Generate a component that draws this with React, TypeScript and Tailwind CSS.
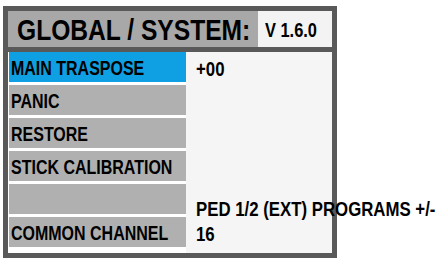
const font = { fontFamily: '"Liberation Sans", Arial, sans-serif' };

const rows = [
  { label: 'MAIN TRASPOSE', value: '+00', active: true },
  { label: 'PANIC', value: '' },
  { label: 'RESTORE', value: '' },
  { label: 'STICK CALIBRATION', value: '' },
  { label: '', value: 'PED 1/2 (EXT) PROGRAMS +/-', low: true },
  { label: 'COMMON CHANNEL', value: '16' },
];

// condensed look: the source font is a narrow grotesk, squeeze Liberation Sans
function Narrow({ children, wide }: { children: React.ReactNode; wide?: boolean }) {
  return (
    <span className={`inline-block origin-left whitespace-nowrap ${wide ? 'scale-x-[0.84]' : 'scale-x-[0.82]'}`}>
      {children}
    </span>
  );
}

export default function App() {
  return (
    <div className="min-h-screen bg-white pl-[3px] pt-[6px]" style={font}>
      <div className="w-[334px] h-[252px] border-[5px] border-[#595959] flex flex-col">
        <div className="h-[41px] shrink-0 flex border-b-[5px] border-[#595959]">
          <div className="w-[250px] bg-[#a8a8a8] flex items-center pl-[9px] pt-[1px] text-[30px] font-bold text-black leading-none">
            <Narrow>GLOBAL / SYSTEM:</Narrow>
          </div>
          <div className="flex-1 bg-[#f3f3f3] flex items-center pl-[7px] pt-[1px] text-[20px] font-bold text-black leading-none">
            <Narrow>V 1.6.0</Narrow>
          </div>
        </div>
        <div className="flex-1 flex min-h-0">
          <div className="w-[178px] shrink-0 bg-white flex flex-col gap-[3px] pl-px">
            {rows.map((r, i) => (
              <div
                key={i}
                className={`h-[30px] shrink-0 flex items-center pl-[2px] pt-[3px] text-[19.5px] font-bold text-black leading-none ${r.active ? 'bg-[#0f9fe3]' : 'bg-[#b0b0b0]'}`}
              >
                <Narrow>{r.label}</Narrow>
              </div>
            ))}
          </div>
          <div className="flex-1 min-w-0 bg-[#f5f5f5] flex flex-col gap-[3px]">
            {rows.map((r, i) => (
              <div
                key={i}
                className={`h-[30px] shrink-0 flex items-center pl-[10px] text-[20px] font-bold text-black leading-none ${r.low ? 'pt-[19px]' : 'pt-[4px]'}`}
              >
                <Narrow wide>{r.value}</Narrow>
              </div>
            ))}
          </div>
        </div>
      </div>
    </div>
  );
}
